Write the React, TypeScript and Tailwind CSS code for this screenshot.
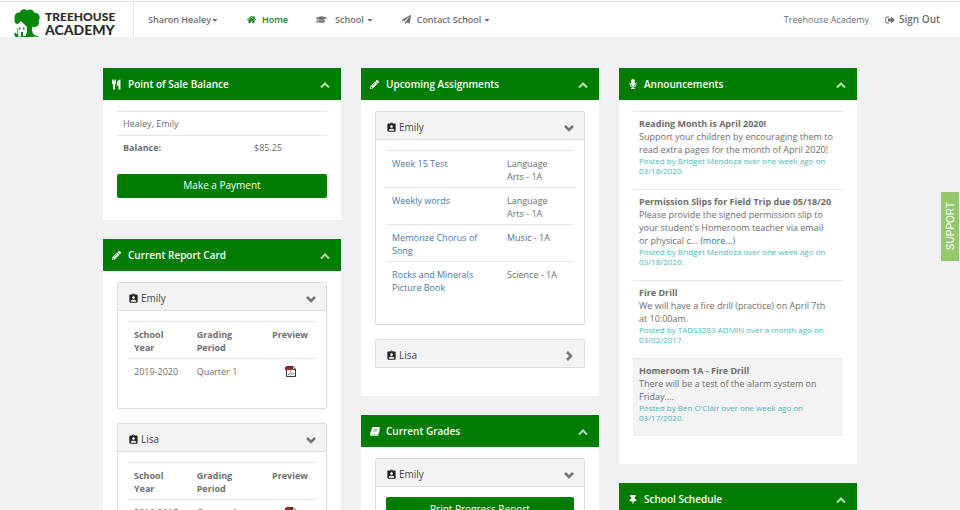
import type { ReactNode } from 'react';
import { FaCaretDown, FaGraduationCap, FaHome, FaMicrophone, FaPaperPlane, FaPencilAlt, FaThumbtack } from 'react-icons/fa';
import { MdAssignmentInd } from 'react-icons/md';

interface PanelProps {
    title: string;
    icon: ReactNode;
    children?: ReactNode;
}

interface StudentCardProps {
    name: string;
    open?: boolean;
    children?: ReactNode;
}

const assignments = [
    { name: 'Week 15 Test', course: 'Language Arts - 1A' },
    { name: 'Weekly words', course: 'Language Arts - 1A' },
    { name: 'Memorize Chorus of Song', course: 'Music - 1A' },
    { name: 'Rocks and Minerals Picture Book', course: 'Science - 1A' },
];

const announcements = [
    {
        title: 'Reading Month is April 2020!',
        body: 'Support your children by encouraging them to read extra pages for the month of April 2020!',
        posted: 'Posted by Bridget Mendoza over one week ago on 03/18/2020.',
    },
    {
        title: 'Permission Slips for Field Trip due 05/18/20',
        body: "Please provide the signed permission slip to your student's Homeroom teacher via email or\u00a0physical c...",
        more: true,
        posted: 'Posted by Bridget Mendoza over one week ago on 03/18/2020.',
    },
    {
        title: 'Fire Drill',
        body: 'We will have a fire drill (practice) on April 7th at\u00a010:00am.',
        posted: 'Posted by TADS3283 ADMIN over a month ago on 03/02/2017.',
    },
    {
        title: 'Homeroom 1A - Fire Drill',
        body: 'There will be a test of the alarm system on Friday....',
        posted: "Posted by Ben O'Clair over one week ago on 03/17/2020.",
        shaded: true,
    },
];

function TreeLogo() {
    return (
        <svg viewBox="0 0 27 28" className="h-7 w-[27px]" aria-hidden="true">
            <g fill="#078a0c">
                <circle cx="5" cy="8" r="4.500" />
                <circle cx="4" cy="11.500" r="3.500" />
                <circle cx="10" cy="5" r="4.700" />
                <circle cx="16" cy="5" r="4.500" />
                <circle cx="21" cy="8.500" r="4.700" />
                <circle cx="20.500" cy="13.500" r="4.500" />
                <circle cx="13" cy="11" r="7" />
                <path d="M12 15H19.500C17.500 19 17.500 24 20.500 26L25.500 27.500L14 28H3L11.500 26.500C13.500 24 13.500 20 12 15Z" />
            </g>
            {/* house */}
            <path fill="#fff" d="M1 18L7 12L13 18L12 19V26.500L4 27V19H1Z" />
            <path fill="#078a0c" d="M5 18.500H6.500V20.500H5ZM9 18.500H10.500V20.500H9ZM7 23H9V27H7ZM0 25L1.500 23.500L4 26V28H1.500ZM3.500 19H4.200V26H3.500Z" />
        </svg>
    );
}

function CutleryIcon() {
    return (
        <svg viewBox="0 0 16 18" fill="currentColor" className="h-[11px] w-[9px]" aria-hidden="true">
            <path d="M0 0H1.500L2 4.500L2.600 0H4L4.600 4.500L5.300 0H6.700L7 6C7 7.500 6 8.500 5.500 9V18H2V9C1 8.500 0 7.500 0 6Z" />
            <path d="M15 0V18H11.500V11H8.500C8.500 5 10.500 0 15 0Z" />
        </svg>
    );
}

function BookIcon() {
    return (
        <svg viewBox="0 0 18 16" fill="currentColor" className="h-[9px] w-[10px]" aria-hidden="true">
            <path
                fillRule="evenodd"
                d="M6 0H16.500Q18 .5 17.500 2L14.500 13Q14 14 13 14H3Q2 14 2 14.700H14.500L17.200 5L18 5.500L15 15Q14.500 16 13.500 16H2.500Q0 16 0 13L3.500 2Q4 0 6 0ZM6.500 3.500L6.200 4.600H13.500L13.800 3.500ZM5.700 6.500L5.400 7.600H12.700L13 6.500Z"
            />
        </svg>
    );
}

function SignOutIcon() {
    return (
        <svg viewBox="0 0 20 16" fill="currentColor" className="h-2 w-2.5" aria-hidden="true">
            <path d="M8 1V3H4Q2.500 3 2.500 4.500V11.500Q2.500 13 4 13H8V15H4Q.5 15 .5 11.500V4.500Q.5 1 4 1Z" />
            <path d="M12 1L20 8L12 15V11H6V5H12Z" />
        </svg>
    );
}

function PdfIcon() {
    return (
        <svg viewBox="0 0 11 11" className="h-[11px] w-[11px]" aria-hidden="true">
            <path d="M1.500.5H8L10.500 3V10.500H1.500Z" fill="#fff" stroke="#3c3030" />
            <path d="M7.500.5V3.500H10.500" fill="none" stroke="#3c3030" />
            <path d="M0 1H7V4H0Z" fill="#a3271f" />
            <path d="M3 9C5 7.500 5.500 6 5.300 4.800C6 7 7 8 9 8C6.500 7.500 5 8 3 9Z" fill="none" stroke="#8c6f6f" strokeWidth=".7" />
        </svg>
    );
}

function Chevron({ d, width }: { d: string; width: number }) {
    return (
        <svg viewBox="0 0 10 10" className="h-2.5 w-2.5" fill="none" stroke="currentColor" strokeWidth={width} aria-hidden="true">
            <path d={d} />
        </svg>
    );
}

function Panel({ title, icon, children }: PanelProps) {
    return (
        <section className="bg-white">
            <header className="flex h-8 items-center bg-[#007d00] pr-[11px] pl-[9px] text-white">
                <span className="flex w-4 items-center">{icon}</span>
                <h2 className="flex-1 text-[10px] font-semibold">{title}</h2>
                <button type="button" aria-label={`Collapse ${title}`} className="pt-0.5 text-[#b5dcb5]">
                    <Chevron d="M1 7.500L5 3.500L9 7.500" width={2} />
                </button>
            </header>
            <div className="px-3.5 pt-[11px] pb-7">{children}</div>
        </section>
    );
}

function StudentCard({ name, open = true, children }: StudentCardProps) {
    return (
        <div className="rounded-xs border border-[#ddd]">
            <button type="button" className="flex h-[27px] w-full items-center bg-[#f3f3f3] px-2.5 pt-1 text-left text-[#444]">
                <MdAssignmentInd className="h-[11px] w-[11px] text-[#222]" />
                <span className="flex-1 pl-0.5 text-[10px]">{name}</span>
                <span className="text-[#777]">
                    {open ? <Chevron d="M1 3L5 7L9 3" width={2.6} /> : <Chevron d="M3 1L7 5L3 9" width={2.6} />}
                </span>
            </button>
            {open && <div className="border-t border-[#ddd] px-2.5 pt-2.5 pb-[26px]">{children}</div>}
        </div>
    );
}

function ReportTable({ year, period }: { year: string; period: string }) {
    return (
        <table className="w-full table-fixed text-left">
            <thead>
                <tr className="border-t border-[#e6e6e6] align-top">
                    <th className="w-1/3 px-1.5 pt-1.5 pb-1 font-bold">School Year</th>
                    <th className="w-1/3 px-1.5 pt-1.5 pb-1 font-bold">Grading Period</th>
                    <th className="pt-1.5 pr-2 pb-1 text-right font-bold">Preview</th>
                </tr>
            </thead>
            <tbody>
                <tr className="border-t border-[#e6e6e6] align-top">
                    <td className="px-1.5 pt-1.5 pb-1">{year}</td>
                    <td className="px-1.5 pt-1.5 pb-1">{period}</td>
                    <td className="pt-[7px] pr-5 pb-1">
                        <a href="#pdf" aria-label={`${year} report card`} className="flex justify-end"><PdfIcon /></a>
                    </td>
                </tr>
            </tbody>
        </table>
    );
}

function Navbar() {
    return (
        <header className="flex h-[37px] items-stretch bg-white pt-px">
            <div className="flex flex-1 border-t border-[#dfe3e5] pr-5">
                <a href="#top" className="flex w-[134px] shrink-0 items-start gap-1 border-r border-[#e2e6e8] pt-[7px] pl-3.5">
                    <TreeLogo />
                    <span className="flex flex-col pt-0.5 font-['Lato'] font-black text-[#2e2a2b]">
                        <span className="text-[12px] leading-[12px]">TREEHOUSE</span>
                        <span className="text-[14px] leading-[14px]">ACADEMY</span>
                    </span>
                </a>
                <nav className="flex flex-1 items-center pl-3.5 font-semibold">
                    <button type="button" className="flex items-center">
                        Sharon Healey<FaCaretDown className="h-2 w-2" />
                    </button>
                    <a href="#home" className="ml-7 flex items-center gap-1.5 text-[#1b7d1b]">
                        <FaHome className="h-[9px] w-[9px]" />Home
                    </a>
                    <button type="button" className="ml-7 flex items-center">
                        <FaGraduationCap className="mr-2 h-[11px] w-[11px]" />School<FaCaretDown className="ml-0.5 h-2 w-2" />
                    </button>
                    <button type="button" className="ml-7 flex items-center">
                        <FaPaperPlane className="mr-1.5 h-[9px] w-[9px]" />Contact School<FaCaretDown className="ml-0.5 h-2 w-2" />
                    </button>
                </nav>
                <div className="flex items-center gap-4">
                    <span>Treehouse Academy</span>
                    <a href="#signout" className="flex items-center gap-1 text-[10px] font-semibold">
                        <SignOutIcon />Sign Out
                    </a>
                </div>
            </div>
        </header>
    );
}

export default function App() {
    return (
        <div className="min-h-screen bg-[#f1f1f4] font-['Open_Sans',sans-serif] text-[9px] leading-[13px] text-[#6e6e6e]">
            <Navbar />
            <main className="mx-auto grid max-w-[754px] grid-cols-3 items-start gap-5 pt-[31px]">
                <div className="flex flex-col gap-[19px]">
                    <Panel title="Point of Sale Balance" icon={<CutleryIcon />}>
                        <table className="mb-3.5 w-full table-fixed text-left">
                            <colgroup>
                                <col className="w-[131px]" />
                                <col />
                            </colgroup>
                            <tbody>
                                <tr className="h-6 border-t border-[#e6e6e6]">
                                    <td colSpan={2} className="px-1.5">Healey, Emily</td>
                                </tr>
                                <tr className="h-6 border-t border-[#e6e6e6]">
                                    <th className="px-1.5 font-bold">Balance:</th>
                                    <td className="px-1.5">$85.25</td>
                                </tr>
                            </tbody>
                        </table>
                        <button type="button" className="-mb-1.5 h-6 w-full rounded-xs bg-[#007d00] text-[10px] text-white">Make a Payment</button>
                    </Panel>
                    <Panel title="Current Report Card" icon={<FaPencilAlt className="h-[9px] w-[9px]" />}>
                        <div className="flex flex-col gap-3.5">
                            <StudentCard name="Emily">
                                <ReportTable year="2019-2020" period="Quarter 1" />
                            </StudentCard>
                            <StudentCard name="Lisa">
                                <ReportTable year="2016-2017" period="Quarter 1" />
                            </StudentCard>
                        </div>
                    </Panel>
                </div>

                <div className="flex flex-col gap-[19px]">
                    <Panel title="Upcoming Assignments" icon={<FaPencilAlt className="h-[9px] w-[9px]" />}>
                        <div className="flex flex-col gap-3.5">
                            <StudentCard name="Emily">
                                <table className="w-full table-fixed text-left">
                                    <tbody>
                                        {assignments.map((item) => (
                                            <tr key={item.name} className="border-t border-[#e6e6e6] align-top">
                                                <td className="w-[115px] px-1.5 pt-1.5 pb-1">
                                                    <a href="#assignment" className="text-[#4878a8]">{item.name}</a>
                                                </td>
                                                <td className="pt-1.5 pr-4 pb-1 pl-1.5">{item.course}</td>
                                            </tr>
                                        ))}
                                    </tbody>
                                </table>
                            </StudentCard>
                            <StudentCard name="Lisa" open={false} />
                        </div>
                    </Panel>
                    <Panel title="Current Grades" icon={<BookIcon />}>
                        <StudentCard name="Emily">
                            <button type="button" className="h-6 w-full rounded-xs bg-[#007d00] text-[10px] text-white">Print Progress Report</button>
                        </StudentCard>
                    </Panel>
                </div>

                <div className="flex flex-col gap-[19px]">
                    <Panel title="Announcements" icon={<FaMicrophone className="h-[10px] w-[10px]" />}>
                        {announcements.map((item) => (
                            <article key={item.title} className={`border-t border-[#e6e6e6] px-1.5 pt-[5px] pb-[13px] ${item.shaded ? 'bg-[#f3f3f3]' : ''}`}>
                                <h3 className="font-bold">{item.title}</h3>
                                <p>
                                    {item.body}{' '}
                                    {item.more && <a href="#more" className="text-[#3f6f93]">(more...)</a>}
                                </p>
                                <p className="text-[8px] leading-[10px] text-[#47b9bd]">{item.posted}</p>
                            </article>
                        ))}
                    </Panel>
                    <Panel title="School Schedule" icon={<FaThumbtack className="h-[9px] w-[10px]" />} />
                </div>
            </main>
            <button
                type="button"
                className="fixed top-48 right-px flex h-[69px] w-[18px] items-center justify-center bg-[#93c96c] font-['Liberation_Sans',sans-serif] text-[10px] text-white"
            >
                <span className="rotate-180 [writing-mode:vertical-rl]">SUPPORT</span>
            </button>
        </div>
    );
}
